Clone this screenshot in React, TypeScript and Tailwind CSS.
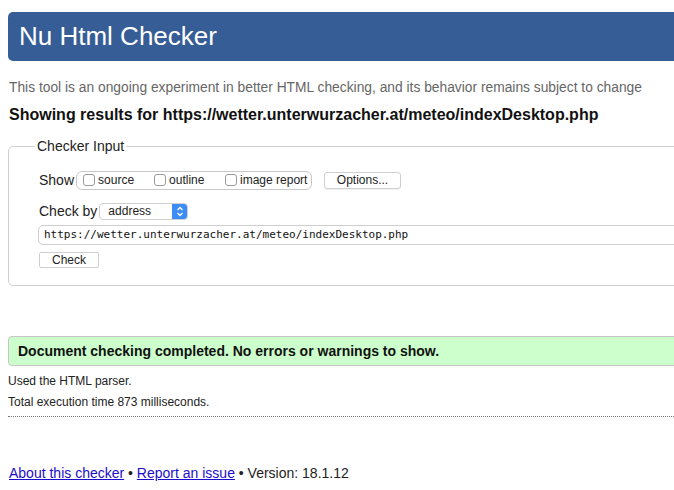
import React from "react";

const sans = { fontFamily: '"Liberation Sans", Arial, sans-serif' };

function Box({ label, w }: { label: string; w?: string }) {
  return (
    <span className={`flex flex-none items-center whitespace-nowrap ${w ?? ""}`}>
      <span className="w-[12px] h-[12px] flex-none rounded-[3px] border border-[#9a9a9a] bg-white" />
      <span className="ml-[3px] text-[12px] text-[#222]">{label}</span>
    </span>
  );
}

export default function App() {
  return (
    <div className="w-[674px] h-[490px] overflow-hidden bg-white text-[#222] font-['Liberation_Sans',Arial,sans-serif]">
      <div className="w-[740px] pl-[8px]">
        <div className="mt-[12px] h-[49px] rounded-[5px] bg-[#365d95] pl-[11px] text-[26px] leading-[49px] text-white">
          Nu Html Checker
        </div>
        <div className="mt-[17px] h-[20px] pl-[1px] text-[13.8px] leading-[20px] text-[#666] whitespace-nowrap">
          This tool is an ongoing experiment in better HTML checking, and its behavior remains subject to change
        </div>
        <div className="mt-[7px] h-[20px] pl-[1px] text-[16px] font-bold leading-[20px] text-[#111] whitespace-nowrap">
          Showing results for https://wetter.unterwurzacher.at/meteo/indexDesktop.php
        </div>
        <fieldset className="mt-[11px] rounded-[5px] border border-[#cfcfcf] pl-[30px] pb-[17px]">
          <legend className="-ml-[4px] px-[2px] text-[14px] leading-[20px] text-[#222]">Checker Input</legend>
          <div className="mt-[14px] flex h-[20px] items-center">
            <span className="text-[14px] text-[#222]">Show</span>
            <div className="ml-[2px] flex h-[19px] w-[236px] flex-none items-center rounded-[6px] border border-[#c8c8c8] pl-[6px]">
              <Box label="source" w="w-[71px]" />
              <Box label="outline" w="w-[71px]" />
              <Box label="image report" />
            </div>
            <button className="ml-[12px] h-[17px] w-[77px] flex-none rounded-[3px] border border-[#cfcfcf] bg-white text-[12px] leading-[15px] text-[#222] shadow-[0_1px_0_rgba(0,0,0,0.05)]">
              Options...
            </button>
          </div>
          <div className="mt-[11px] flex h-[20px] items-center">
            <span className="text-[14px] text-[#222]">Check by</span>
            <div className="ml-[2px] flex h-[17px] w-[89px] items-stretch overflow-hidden rounded-[4px] border border-[#cfcfcf] bg-white">
              <span className="flex-1 pl-[8px] text-[12px] leading-[15px] text-[#222]">address</span>
              <span className="flex w-[15px] items-center justify-center bg-[#3c8cf7]">
                <svg width="8" height="11" viewBox="0 0 8 11" fill="none" stroke="white" strokeWidth="1.3">
                  <path d="M1.5 4 L4 1.5 L6.5 4" />
                  <path d="M1.5 7 L4 9.5 L6.5 7" />
                </svg>
              </span>
            </div>
          </div>
          <div
            className="mt-[4px] -ml-[1px] h-[20px] rounded-l-[5px] border border-[#cfcfcf] pl-[5px] text-[11px] leading-[18px] text-[#111]"
            style={{ fontFamily: '"DejaVu Sans Mono", monospace' }}
          >
            https://wetter.unterwurzacher.at/meteo/indexDesktop.php
          </div>
          <button className="mt-[7px] block h-[16px] w-[60px] rounded-[2px] border border-[#cfcfcf] bg-white text-[12px] leading-[14px] text-[#222]">
            Check
          </button>
        </fieldset>
        <div className="mt-[50px] h-[30px] rounded-[4px] border border-[#c6c6c6] bg-[#ccffcc] pl-[9px] text-[14px] font-bold leading-[28px] text-[#111]">
          Document checking completed. No errors or warnings to show.
        </div>
        <div className="mt-[5px] h-[20px] text-[12px] leading-[20px] text-[#222]">Used the HTML parser.</div>
        <div className="mt-[1px] h-[20px] text-[12px] leading-[20px] text-[#222]">Total execution time 873 milliseconds.</div>
        <div className="mt-[4px] border-t border-dotted border-[#777]" />
        <div className="mt-[46px] pl-[1px] text-[14px] leading-[20px] text-[#222]" style={sans}>
          <a href="#" className="text-[#1a0dcc] underline">About this checker</a>
          {" \u2022 "}
          <a href="#" className="text-[#1a0dcc] underline">Report an issue</a>
          {" \u2022 Version: 18.1.12"}
        </div>
      </div>
    </div>
  );
}
